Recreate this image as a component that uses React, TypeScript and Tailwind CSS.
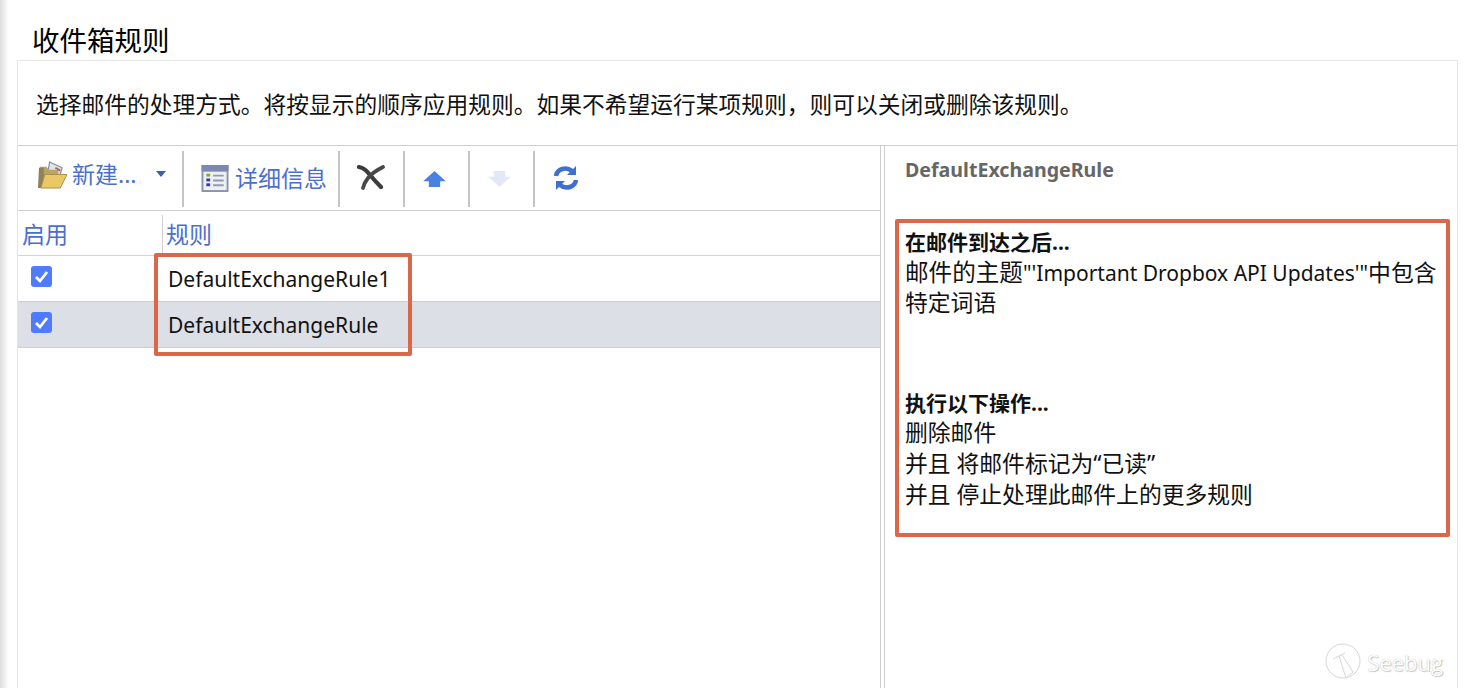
import React from "react";

const CJK = "font-['Noto_Sans','Noto_Sans_CJK_SC',sans-serif]";

const Sep = () => <div className="w-[2px] h-[56px] mt-[1px] bg-[#c4c4c4]" />;

const FolderIcon = () => (
  <svg width="29" height="29" viewBox="0 0 30 30">
    <path d="M12 2 L25 8 L22 18 L10 14 Z" fill="#dfe3ee" stroke="#8a8a96" strokeWidth="1.2" />
    <path d="M18 8 L23 11" stroke="#c05a4a" strokeWidth="2" />
    <path d="M2 7 H9 L11 10 H21 V15 H2 Z" fill="#b9a468" />
    <path d="M0 29 L1 8 H6 V15 H28 L22 29 Z" fill="#8f8158" />
    <path d="M3 29 L7 15 H30 L23 29 Z" fill="#ecc766" stroke="#a98f48" strokeWidth="1" />
  </svg>
);

const DetailsIcon = () => (
  <svg width="28" height="27" viewBox="0 0 28 28">
    <rect x="0" y="0" width="28" height="28" fill="#8b93a8" />
    <rect x="0" y="0" width="28" height="6" fill="#7b88b4" />
    <rect x="2" y="7" width="24" height="19" fill="#eef0f6" />
    <rect x="5" y="9" width="4" height="3" fill="#7cb02c" />
    <rect x="5" y="14" width="4" height="3" fill="#3a3ab8" />
    <rect x="5" y="19" width="4" height="3" fill="#3a3ab8" />
    <path d="M12 11 H23 M12 16 H23 M12 21 H23" stroke="#8f9bb0" strokeWidth="2" />
  </svg>
);

const CloseIcon = () => (
  <svg width="28" height="26" viewBox="0 0 28 26" fill="none" className="blur-[0.6px] -mt-[2px] -ml-[2px]">
    <path d="M2 3 Q8 4 13 11 Q18 17 24 23" stroke="#3c3c3c" strokeWidth="4.2" strokeLinecap="round" />
    <path d="M26 3 Q16 8 11 14 Q7 19 6 24" stroke="#484848" strokeWidth="3.8" strokeLinecap="round" />
  </svg>
);

const ArrowIcon = ({ up, light }: { up: boolean; light: boolean }) => (
  <svg width="23" height="16" viewBox="0 0 24 17" className="blur-[0.5px] mt-[1px] -ml-[4px]">
    <path
      d={up ? "M12 0 L24 11 H18 V17 H6 V11 H0 Z" : "M6 0 H18 V6 H24 L12 17 L0 6 H6 Z"}
      fill={light ? "#e3e8f8" : "#4a80e4"}
    />
  </svg>
);

const RefreshIcon = () => (
  <svg width="24" height="26" viewBox="0 0 24 26" fill="none" className="blur-[0.4px] -ml-[2px]">
    <path d="M2 11 C3 4 12 1 18 6" stroke="#3f6fd0" strokeWidth="4.5" />
    <path d="M22 1 V10 H13 Z" fill="#3f6fd0" />
    <path d="M22 15 C21 22 12 25 6 20" stroke="#3f6fd0" strokeWidth="4.5" />
    <path d="M2 25 V16 H11 Z" fill="#3f6fd0" />
  </svg>
);

const Check = () => (
  <div className="w-[21px] h-[21px] rounded-[3px] bg-[#4f7cff] flex items-center justify-center">
    <svg width="15" height="15" viewBox="0 0 15 15" fill="none">
      <path d="M2 8 L6 12 L13 3" stroke="white" strokeWidth="2.8" />
    </svg>
  </div>
);

const SeebugLogo = () => (
  <div className="absolute right-[28px] bottom-[6px] flex items-center gap-[6px] select-none">
    <svg width="36" height="40" viewBox="0 0 36 40" fill="none" stroke="#d6d6d6" strokeWidth="1">
      <circle cx="18" cy="19" r="17" />
      <path d="M8 17 L20 11 M14 14 L21 36 L28 30 L17 13" />
    </svg>
    <span className="font-['Open_Sans',sans-serif] text-[22px] text-white [text-shadow:0_0_1px_#aaaaaa,1px_1px_1px_#cccccc]">
      Seebug
    </span>
  </div>
);

export default function App() {
  return (
    <div className={`relative h-[688px] w-[1471px] overflow-hidden bg-white text-[#111] ${CJK}`}>
      <div className="absolute left-0 top-0 h-full w-[9px] bg-gradient-to-r from-[#dedede] to-white" />
      <h1 className="relative pl-[32px] h-[60px] pt-[20px] text-[27.5px] leading-[42px] font-normal text-black">收件箱规则</h1>
      <div className="relative ml-[17px] w-[1441px] h-[628px] border border-b-0 border-[#e6e6e6] flex flex-col">
        {/* description */}
        <div className="h-[84px] shrink-0 pl-[18px] pt-[26px] text-[22.75px] leading-[36px] whitespace-nowrap">
          {"选择邮件的处理方式。将按显示的顺序应用规则。如果不希望运行某项规则\uFF0C则可以关闭或删除该规则。"}
        </div>
        <div className="flex-1 flex border-t border-[#cfcfcf] min-h-0">
          {/* left pane */}
          <div className="w-[863px] shrink-0 border-r border-[#cfcfcf] flex flex-col">
            <div className="h-[65px] shrink-0 border-b border-[#cfcfcf] flex items-center text-[#4a6fd0]">
              <div className="w-[164px] h-full flex items-center justify-between pl-[20px] pr-[16px] text-[23px]">
                <span className="flex items-center gap-[5px] -mt-[7px]">
                  <FolderIcon />
                  <span>新建...</span>
                </span>
                <span className="w-0 h-0 -mt-[9px] border-x-[5px] border-x-transparent border-t-[6px] border-t-[#3d5eb8]" />
              </div>
              <Sep />
              <div className="w-[154px] flex items-center gap-[6px] pl-[17px] text-[23px] whitespace-nowrap">
                <DetailsIcon />
                <span>详细信息</span>
              </div>
              <Sep />
              <div className="w-[63px] flex justify-center"><CloseIcon /></div>
              <Sep />
              <div className="w-[63px] flex justify-center"><ArrowIcon up light={false} /></div>
              <Sep />
              <div className="w-[63px] flex justify-center"><ArrowIcon up={false} light /></div>
              <Sep />
              <div className="w-[63px] flex justify-center"><RefreshIcon /></div>
            </div>
            <div className="h-[45px] shrink-0 border-b border-[#d4d4d4] flex text-[#4a6fd0] text-[23px]">
              <div className="w-[144px] pl-[4px] pt-[6px] leading-[34px]">启用</div>
              <div className="flex-1 mt-[4px] border-l border-[#cfcfcf] pl-[3px] pt-[2px] leading-[34px]">规则</div>
            </div>
            {["DefaultExchangeRule1", "DefaultExchangeRule"].map((name, i) => (
              <div
                key={name}
                className={`h-[46px] shrink-0 flex border-b border-[#cfcfcf] ${i === 1 ? "bg-[#dddfe7]" : ""}`}
              >
                <div className="w-[150px] pl-[13px] pt-[10px]"><Check /></div>
                <div className="pt-[5px] text-[21px] leading-[36px] text-[#111]">{name}</div>
              </div>
            ))}
          </div>
          {/* right pane */}
          <div className="flex-1 ml-[3px] border-l border-[#cfcfcf] pt-[8px] relative">
            <div className="pl-[20px] text-[19.6px] leading-[32px] font-bold text-[#666666]">DefaultExchangeRule</div>
            <div className="ml-[10px] mt-[33px] w-[555px] h-[318px] border-4 border-[#dc6648] rounded-[2px] pl-[6px] pt-[4px] text-[22.8px] leading-[30.6px]">
              <div className="font-bold text-[21px]">在邮件到达之后...</div>
              <div className="whitespace-nowrap">
                <span className="text-[23.6px] leading-none">邮件的主题</span>
                <span className="text-[21px] leading-none">"'Important Dropbox API Updates'"</span>
                <span>中包含</span>
              </div>
              <div>特定词语</div>
              <div className="font-bold text-[21px] mt-[69px]">执行以下操作...</div>
              <div>删除邮件</div>
              <div>并且 将邮件标记为“已读”</div>
              <div>并且 停止处理此邮件上的更多规则</div>
            </div>
          </div>
        </div>
        {/* highlight around rule names */}
        <div className="absolute left-[136px] top-[192px] w-[258px] h-[103px] border-4 border-[#dc6648] rounded-[2px]" />
      </div>
      <SeebugLogo />
    </div>
  );
}
